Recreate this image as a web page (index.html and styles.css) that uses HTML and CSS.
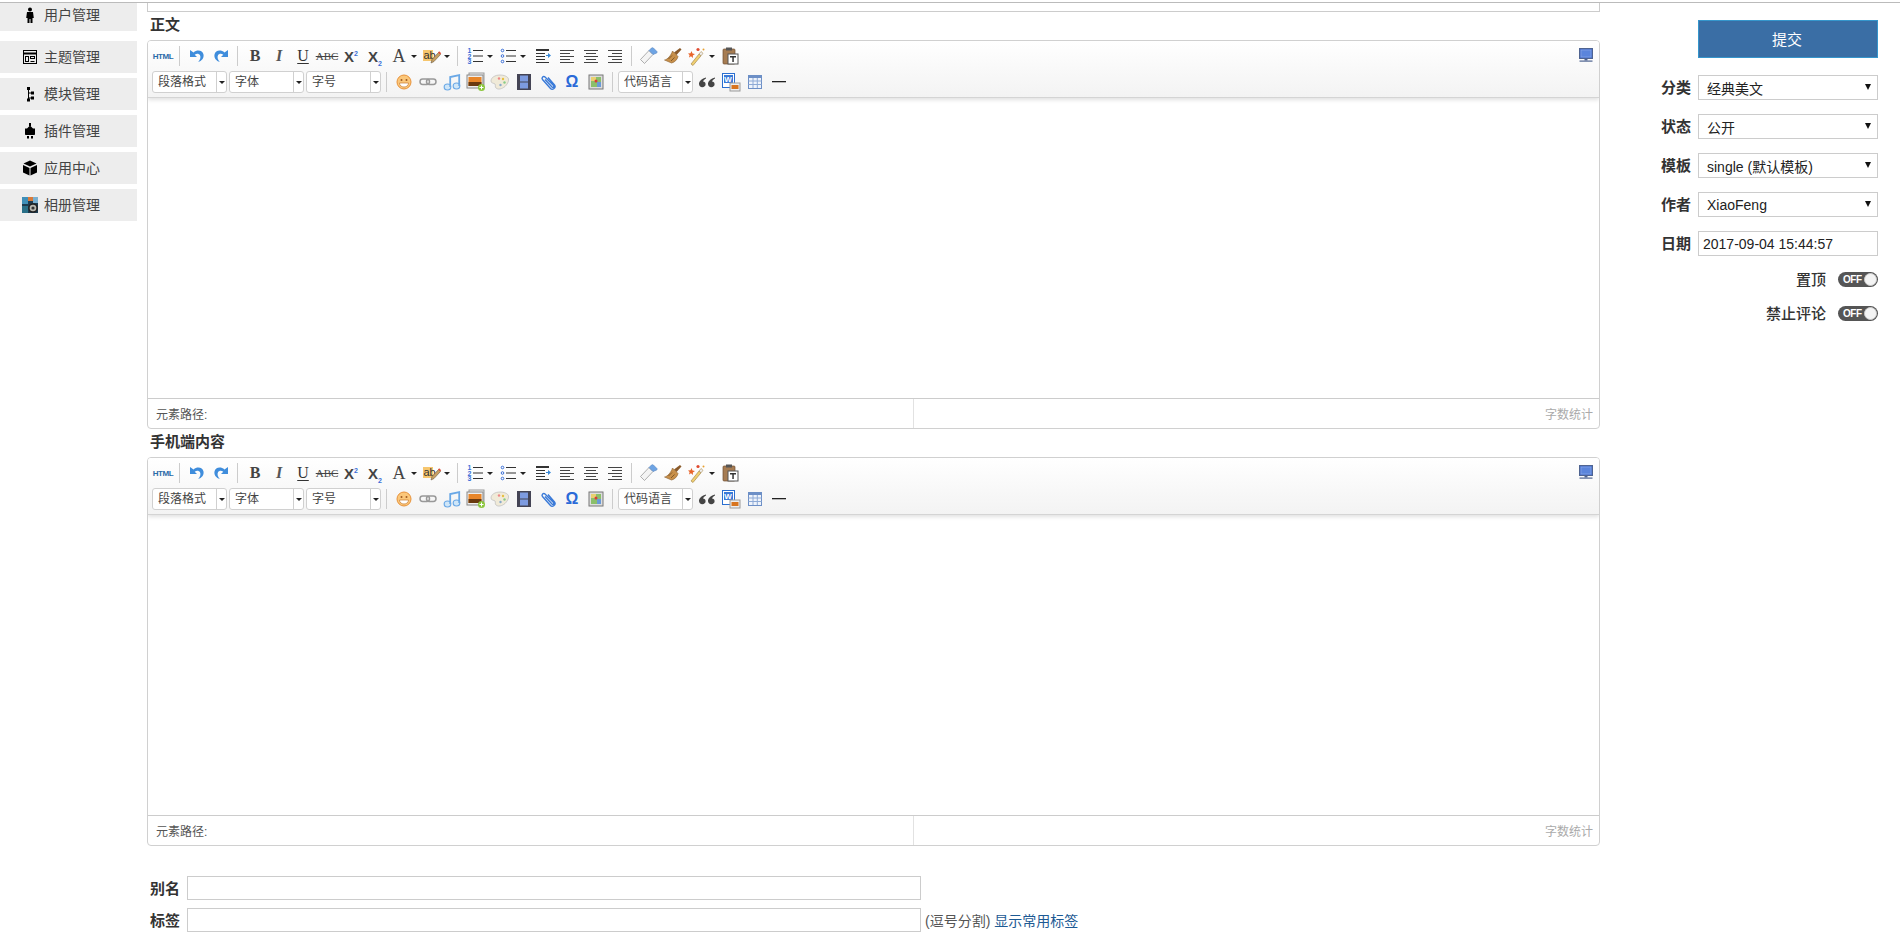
FILE: index.html
```html
<!DOCTYPE html>
<html lang="zh-CN">
<head>
<meta charset="utf-8">
<title>编辑文章</title>
<link rel="stylesheet" href="styles.css">
</head>
<body>
<svg class="defs" aria-hidden="true">
  <symbol id="i-undo" viewBox="0 0 20 20"><path d="M3 4v7h7L7.700 8.700c2-1.500 4.300-1.200 5.300.5 1 1.900.3 4.300-1.800 6.800 3.500-1 6-4 5.300-7.500C15.700 4.500 10.500 3 6.500 6.500z" fill="#3f8ddc"/></symbol>
  <symbol id="i-redo" viewBox="0 0 20 20"><path d="M17 4v7h-7l2.300-2.300c-2-1.500-4.300-1.200-5.300.5-1 1.900-.3 4.300 1.800 6.800-3.500-1-6-4-5.300-7.500C4.300 4.500 9.500 3 13.500 6.500z" fill="#3f8ddc"/></symbol>
  <symbol id="i-pencil" viewBox="0 0 20 20"><path d="M9 17l1-3.500 6.500-7 2 2-6.500 7z" fill="#c9a063" stroke="#6a5a40" stroke-width=".6"/><path d="M16 6.500l1.200-1.300 2 2L18 8.500z" fill="#e0503a"/></symbol>
  <symbol id="i-lines" viewBox="0 0 20 20"><g fill="#333"><rect x="8" y="4" width="10" height="1"/><rect x="8" y="9.500" width="10" height="1"/><rect x="8" y="15" width="10" height="1"/></g></symbol>
  <symbol id="i-ul" viewBox="0 0 20 20"><g fill="none" stroke="#3a6fd8"><circle cx="4.500" cy="4.500" r="1.300"/><circle cx="4.500" cy="10" r="1.300"/><circle cx="4.500" cy="15.500" r="1.300"/></g><g fill="#333"><rect x="8" y="4" width="10" height="1"/><rect x="8" y="9.500" width="10" height="1"/><rect x="8" y="15" width="10" height="1"/></g></symbol>
  <symbol id="i-indent" viewBox="0 0 20 20"><g fill="#333"><rect x="3" y="3" width="13" height="2"/><rect x="3" y="7" width="9" height="1"/><rect x="3" y="10" width="9" height="1"/><rect x="3" y="13" width="9" height="1"/><rect x="3" y="16" width="13" height="1"/></g><path d="M13 9h2V7l3 2.500-3 2.500v-2h-2z" fill="#3a8ad8"/></symbol>
  <symbol id="i-left" viewBox="0 0 20 20"><g fill="#444"><rect x="3" y="4" width="14" height="1"/><rect x="3" y="7" width="10" height="1"/><rect x="3" y="10" width="14" height="1"/><rect x="3" y="13" width="10" height="1"/><rect x="3" y="16" width="14" height="1"/></g></symbol>
  <symbol id="i-center" viewBox="0 0 20 20"><g fill="#444"><rect x="3" y="4" width="14" height="1"/><rect x="5" y="7" width="10" height="1"/><rect x="3" y="10" width="14" height="1"/><rect x="5" y="13" width="10" height="1"/><rect x="3" y="16" width="14" height="1"/></g></symbol>
  <symbol id="i-right" viewBox="0 0 20 20"><g fill="#444"><rect x="3" y="4" width="14" height="1"/><rect x="7" y="7" width="10" height="1"/><rect x="3" y="10" width="14" height="1"/><rect x="7" y="13" width="10" height="1"/><rect x="3" y="16" width="14" height="1"/></g></symbol>
  <symbol id="i-eraser" viewBox="0 0 20 20"><path d="M1.500 13.500 10 4.500l4 4L5.500 17.500z" fill="#f4f4f4" stroke="#9a9a9a" stroke-width=".8"/><path d="M10 4.500l2.500-2.500c.6-.5 1.300-.5 1.900 0l3.300 3.300c.5.600.5 1.200 0 1.800L14 8.500z" fill="#6ea4e4" stroke="#5a86c0" stroke-width=".6"/></symbol>
  <symbol id="i-brush" viewBox="0 0 20 20"><path d="M11 6.500 17 2l1.500 1.500L13.500 9z" fill="#8a5a2a"/><path d="M9.500 5 15 10.500c-.5 3-3.500 6-6.500 6.500L1.500 14c3-.5 6.500-4.500 8-9z" fill="#c8904a" stroke="#8a6030" stroke-width=".6"/><path d="M5.500 13 9 9.500M8 15l3.500-3.500" stroke="#7a5428" stroke-width=".9"/></symbol>
  <symbol id="i-wand" viewBox="0 0 20 20"><path d="M4 18 12 8l2 1.800L6 19.500z" fill="#f0d070" stroke="#a88a50" stroke-width=".7"/><path d="M12 8l2-2.500 2 1.800-2 2.500z" fill="#eee" stroke="#a88a50" stroke-width=".6"/><path d="M4.500 5l1 2.500L8 8 5.800 9.500l.2 2.500-2-1.700L2 11.500l.6-2.500L1 7.500l2.500-.2z" fill="#e8642a"/><circle cx="11" cy="3.500" r="1.600" fill="#e04a30"/><circle cx="16.500" cy="3.500" r="1" fill="#e8a030"/></symbol>
  <symbol id="i-paste" viewBox="0 0 20 20"><rect x="3" y="3" width="12" height="15" rx="1" fill="#a67c52" stroke="#6e4e30" stroke-width=".7"/><rect x="6" y="1.500" width="6" height="3" fill="#555"/><rect x="8" y="8" width="10" height="10" fill="#fff" stroke="#555"/><rect x="10" y="10" width="6" height="1.500" fill="#333"/><rect x="12.300" y="10" width="1.500" height="6" fill="#333"/></symbol>
  <symbol id="i-emoji" viewBox="0 0 20 20"><circle cx="10" cy="10" r="7" fill="#fbc77a" stroke="#e8923a"/><circle cx="7.500" cy="8" r="1" fill="#a05a20"/><circle cx="12.500" cy="8" r="1" fill="#a05a20"/><path d="M5.500 11h9c0 2.500-2 4-4.500 4s-4.500-1.500-4.500-4z" fill="#fff" stroke="#c67a30" stroke-width=".7"/></symbol>
  <symbol id="i-link" viewBox="0 0 20 20"><g fill="none" stroke="#999" stroke-width="1.500"><rect x="2" y="7" width="9.500" height="5.500" rx="2.700"/><rect x="8.500" y="7" width="9.500" height="5.500" rx="2.700"/></g></symbol>
  <symbol id="i-music" viewBox="0 0 20 20"><g fill="#cfe6f8" stroke="#6aa8e6" stroke-width="1.200"><ellipse cx="5.500" cy="15" rx="3.300" ry="3"/><ellipse cx="14.500" cy="14" rx="3.300" ry="3"/><path d="M8.200 15V5l9-2v11" fill="none" stroke-width="1.800"/></g></symbol>
  <symbol id="i-image" viewBox="0 0 20 20"><rect x="3" y="1" width="15" height="12" fill="#f0f0f0" stroke="#999"/><rect x="1" y="3" width="16" height="13" fill="#eee" stroke="#888"/><rect x="2.500" y="5" width="13" height="9" fill="#e8862a"/><rect x="2.500" y="10" width="13" height="4" fill="#6a3a10"/><circle cx="15.500" cy="15.500" r="3.500" fill="#8cc63e"/><path d="M15.500 13.500v4M13.500 15.500h4" stroke="#fff"/></symbol>
  <symbol id="i-palette" viewBox="0 0 20 20"><path d="M10 3C5 3 1 5.500 1 9c0 2.500 3 2 4 3 1 1.200-.5 2.500 1 4 2 2 6 1 9-1.500 2-1.800 4-5 3.500-7.500C18 4.500 14 3 10 3z" fill="#f0ead8" stroke="#bbb" stroke-width=".7"/><circle cx="9" cy="6.500" r="1.200" fill="#e88"/><circle cx="13" cy="7" r="1.200" fill="#e8c040"/><circle cx="14.500" cy="10.500" r="1.200" fill="#8c8"/><circle cx="10.500" cy="13" r="1.200" fill="#8ac"/></symbol>
  <symbol id="i-film" viewBox="0 0 20 20"><rect x="3" y="2" width="14" height="16" fill="#445"/><rect x="6" y="3.500" width="8" height="6" fill="#7d9be0"/><rect x="6" y="10.500" width="8" height="6" fill="#7d9be0"/></symbol>
  <symbol id="i-clip" viewBox="0 0 20 20"><path d="M7 7.500l7 7.500c1 1 2.500-.5 1.500-1.500L7 5C5.500 3.500 3 5.500 4.500 7.500l8 9c2 2 6-1 4-3.500L10 5.500" fill="none" stroke="#3a7ad8" stroke-width="1.400"/></symbol>
  <symbol id="i-map" viewBox="0 0 20 20"><rect x="3" y="3" width="14" height="14" fill="#ddd" stroke="#777"/><rect x="5" y="5" width="10" height="10" fill="#8bbf6a"/><rect x="5" y="5" width="5" height="4" fill="#e9d070"/><rect x="11" y="10" width="4" height="5" fill="#6a9ad8"/><circle cx="10" cy="9" r="1.500" fill="#d83a3a"/></symbol>
  <symbol id="i-quote" viewBox="0 0 20 20"><g fill="#444"><path d="M9 5.500C5 6.500 2 9 2 12c0 2 1.400 3.200 3.300 3.200S8.600 14 8.600 12.300c0-1.600-1.100-2.700-2.600-2.700.6-1.400 1.800-2.400 3-3z"/><path d="M18 5.500c-4 1-7 3.500-7 6.500 0 2 1.400 3.200 3.300 3.200s3.300-1.200 3.300-2.900c0-1.600-1.100-2.700-2.600-2.700.6-1.400 1.800-2.400 3-3z"/></g></symbol>
  <symbol id="i-word" viewBox="0 0 20 20"><rect x="1.500" y="1.500" width="12" height="14" fill="#fff" stroke="#2a6fd0"/><rect x="3" y="3" width="9" height="8" fill="#3a7ad8"/></symbol>
  <symbol id="i-wordimg" viewBox="0 0 20 20"><rect x="9" y="11" width="10" height="8" fill="#eee" stroke="#999"/><rect x="10.500" y="13" width="7" height="4" fill="#d8741e"/></symbol>
  <symbol id="i-table" viewBox="0 0 20 20"><rect x="3.500" y="3.500" width="13" height="13" fill="#eef3fb" stroke="#6d8fc6"/><rect x="3.500" y="3.500" width="13" height="2.500" fill="#6d8fc6"/><path d="M3.500 9h13M3.500 12.500h13M8 6v10M12.300 6v10" stroke="#8eaad6" fill="none"/></symbol>
  <symbol id="i-hr" viewBox="0 0 20 20"><rect x="3" y="9" width="14" height="1.300" fill="#222"/></symbol>
  <symbol id="i-screen" viewBox="0 0 20 20"><rect x="3.500" y="2.500" width="13" height="10" fill="#4a72cc" stroke="#4f6491"/><rect x="5" y="4" width="10" height="7" fill="#5b85dc" stroke="#9ab4e8" stroke-width=".5"/><rect x="8.500" y="13" width="3" height="1.500" fill="#4f6491"/><rect x="3.500" y="14.500" width="13" height="1.200" fill="#4f6491"/></symbol>
  <symbol id="n-user" viewBox="0 0 16 16"><circle cx="8" cy="2.500" r="2"/><path d="M5 5h6l.8 6H10.500v5H8.500v-4h-1v4h-2v-5H4.200z"/></symbol>
  <symbol id="n-theme" viewBox="0 0 16 16"><g fill="none" stroke="#000"><rect x="1.500" y="1.500" width="13" height="13"/><path d="M1.500 4.500h13" stroke-width="2"/><rect x="3.500" y="7.500" width="3" height="5"/><rect x="8.500" y="7.500" width="4" height="2"/><path d="M8.500 12.500h4"/></g></symbol>
  <symbol id="n-tree" viewBox="0 0 16 16"><rect x="5" y="1" width="3" height="3"/><rect x="6" y="4" width="1" height="11"/><rect x="6" y="6.500" width="5" height="1"/><rect x="6" y="11.500" width="5" height="1"/><rect x="9" y="5.500" width="3" height="3"/><rect x="9" y="10.500" width="3" height="3"/><rect x="5" y="12.500" width="3" height="3"/></symbol>
  <symbol id="n-plug" viewBox="0 0 16 16"><rect x="7" y="0" width="2" height="3"/><path d="M8 2.500l3 3H13v5.500c0 .6-.5 1-1 1H4c-.5 0-1-.4-1-1V5.500h2z"/><rect x="5" y="13" width="2" height="2.500"/><rect x="9" y="13" width="2" height="2.500"/></symbol>
  <symbol id="n-box" viewBox="0 0 16 16"><path d="M8 .5l6.500 3L8 6.500 1.500 3.500z"/><path d="M1 5l6.500 3v7.500L1 12.500zM15 5 8.500 8v7.500l6.500-3z"/></symbol>
  <symbol id="n-album" viewBox="0 0 16 16"><rect width="16" height="16" fill="#1d3c50"/><rect width="6" height="7" fill="#3f8fb8"/><rect x="6" y="0" width="5" height="4" fill="#d87a3a"/><rect x="11" y="0" width="5" height="6" fill="#7ab0d0"/><rect x="0" y="9" width="6" height="7" fill="#2a7088"/><circle cx="11" cy="11" r="4.800" fill="#222"/><circle cx="11" cy="11" r="3.300" fill="#b8b8b0"/><circle cx="11" cy="11" r="1.600" fill="#333"/></symbol>
</svg>

<div class="toprule"></div>
<div class="page">
  <nav class="sidebar">
    <a class="nav-item nav-first"><svg class="nav-icon"><use href="#n-user"/></svg>用户管理</a>
    <a class="nav-item"><svg class="nav-icon"><use href="#n-theme"/></svg>主题管理</a>
    <a class="nav-item"><svg class="nav-icon"><use href="#n-tree"/></svg>模块管理</a>
    <a class="nav-item"><svg class="nav-icon"><use href="#n-plug"/></svg>插件管理</a>
    <a class="nav-item"><svg class="nav-icon"><use href="#n-box"/></svg>应用中心</a>
    <a class="nav-item"><svg class="nav-icon"><use href="#n-album"/></svg>相册管理</a>
  </nav>

  <main class="main">
    <div class="title-box"></div>
    <div class="field-label field-label-first">正文</div>
    <section class="editor">
      <div class="toolbar">
        <div class="row">
          <span class="b t-html">HTML</span><i class="sep"></i>
          <span class="b"><svg class="ic"><use href="#i-undo"/></svg></span><span class="b"><svg class="ic"><use href="#i-redo"/></svg></span><i class="sep"></i>
          <span class="b t-b">B</span><span class="b t-i">I</span><span class="b t-u">U</span><span class="b t-s">ABC</span>
          <span class="b t-x"><span>X<sup>2</sup></span></span><span class="b t-x"><span>X<sub>2</sub></span></span>
          <span class="split"><span class="b t-a">A</span><i class="caret"></i></span>
          <span class="split"><span class="b"><svg class="ic" viewBox="0 0 20 20"><rect x="1" y="4" width="10" height="11" fill="#f6c66e"/><text class="svg-ab" x="1.500" y="13">ab</text><use href="#i-pencil" width="20" height="20"/></svg></span><i class="caret"></i></span><i class="sep"></i>
          <span class="split"><span class="b"><svg class="ic" viewBox="0 0 20 20"><text class="svg-num" x="2.500" y="7">1</text><text class="svg-num" x="2.500" y="12.500">2</text><text class="svg-num" x="2.500" y="18">3</text><use href="#i-lines" width="20" height="20"/></svg></span><i class="caret"></i></span>
          <span class="split"><span class="b"><svg class="ic"><use href="#i-ul"/></svg></span><i class="caret"></i></span>
          <span class="b b-gap"><svg class="ic"><use href="#i-indent"/></svg></span><span class="b"><svg class="ic"><use href="#i-left"/></svg></span><span class="b"><svg class="ic"><use href="#i-center"/></svg></span><span class="b"><svg class="ic"><use href="#i-right"/></svg></span><i class="sep"></i>
          <span class="b"><svg class="ic"><use href="#i-eraser"/></svg></span><span class="b"><svg class="ic"><use href="#i-brush"/></svg></span>
          <span class="split"><span class="b"><svg class="ic"><use href="#i-wand"/></svg></span><i class="caret"></i></span>
          <span class="b"><svg class="ic"><use href="#i-paste"/></svg></span>
          <span class="b b-end"><svg class="ic"><use href="#i-screen"/></svg></span>
        </div>
        <div class="row row-two">
          <span class="combo"><span class="combo-text">段落格式</span><span class="combo-arrow"></span></span>
          <span class="combo"><span class="combo-text">字体</span><span class="combo-arrow"></span></span>
          <span class="combo combo-last"><span class="combo-text">字号</span><span class="combo-arrow"></span></span><i class="sep sep-wide"></i>
          <span class="b"><svg class="ic"><use href="#i-emoji"/></svg></span><span class="b"><svg class="ic"><use href="#i-link"/></svg></span><span class="b"><svg class="ic"><use href="#i-music"/></svg></span><span class="b"><svg class="ic"><use href="#i-image"/></svg></span><span class="b"><svg class="ic"><use href="#i-palette"/></svg></span><span class="b"><svg class="ic"><use href="#i-film"/></svg></span><span class="b"><svg class="ic"><use href="#i-clip"/></svg></span><span class="b t-o">Ω</span><span class="b"><svg class="ic"><use href="#i-map"/></svg></span><i class="sep"></i>
          <span class="combo"><span class="combo-text">代码语言</span><span class="combo-arrow"></span></span>
          <span class="b"><svg class="ic"><use href="#i-quote"/></svg></span><span class="b"><svg class="ic" viewBox="0 0 20 20"><use href="#i-word" width="20" height="20"/><text class="svg-w" x="3.300" y="10">W</text><use href="#i-wordimg" width="20" height="20"/></svg></span><span class="b"><svg class="ic"><use href="#i-table"/></svg></span><span class="b"><svg class="ic"><use href="#i-hr"/></svg></span>
        </div>
      </div>
      <div class="canvas"></div>
      <div class="status"><span class="path">元素路径:</span><span class="count">字数统计</span></div>
    </section>

    <div class="field-label">手机端内容</div>
    <section class="editor">
      <div class="toolbar">
        <div class="row">
          <span class="b t-html">HTML</span><i class="sep"></i>
          <span class="b"><svg class="ic"><use href="#i-undo"/></svg></span><span class="b"><svg class="ic"><use href="#i-redo"/></svg></span><i class="sep"></i>
          <span class="b t-b">B</span><span class="b t-i">I</span><span class="b t-u">U</span><span class="b t-s">ABC</span>
          <span class="b t-x"><span>X<sup>2</sup></span></span><span class="b t-x"><span>X<sub>2</sub></span></span>
          <span class="split"><span class="b t-a">A</span><i class="caret"></i></span>
          <span class="split"><span class="b"><svg class="ic" viewBox="0 0 20 20"><rect x="1" y="4" width="10" height="11" fill="#f6c66e"/><text class="svg-ab" x="1.500" y="13">ab</text><use href="#i-pencil" width="20" height="20"/></svg></span><i class="caret"></i></span><i class="sep"></i>
          <span class="split"><span class="b"><svg class="ic" viewBox="0 0 20 20"><text class="svg-num" x="2.500" y="7">1</text><text class="svg-num" x="2.500" y="12.500">2</text><text class="svg-num" x="2.500" y="18">3</text><use href="#i-lines" width="20" height="20"/></svg></span><i class="caret"></i></span>
          <span class="split"><span class="b"><svg class="ic"><use href="#i-ul"/></svg></span><i class="caret"></i></span>
          <span class="b b-gap"><svg class="ic"><use href="#i-indent"/></svg></span><span class="b"><svg class="ic"><use href="#i-left"/></svg></span><span class="b"><svg class="ic"><use href="#i-center"/></svg></span><span class="b"><svg class="ic"><use href="#i-right"/></svg></span><i class="sep"></i>
          <span class="b"><svg class="ic"><use href="#i-eraser"/></svg></span><span class="b"><svg class="ic"><use href="#i-brush"/></svg></span>
          <span class="split"><span class="b"><svg class="ic"><use href="#i-wand"/></svg></span><i class="caret"></i></span>
          <span class="b"><svg class="ic"><use href="#i-paste"/></svg></span>
          <span class="b b-end"><svg class="ic"><use href="#i-screen"/></svg></span>
        </div>
        <div class="row row-two">
          <span class="combo"><span class="combo-text">段落格式</span><span class="combo-arrow"></span></span>
          <span class="combo"><span class="combo-text">字体</span><span class="combo-arrow"></span></span>
          <span class="combo combo-last"><span class="combo-text">字号</span><span class="combo-arrow"></span></span><i class="sep sep-wide"></i>
          <span class="b"><svg class="ic"><use href="#i-emoji"/></svg></span><span class="b"><svg class="ic"><use href="#i-link"/></svg></span><span class="b"><svg class="ic"><use href="#i-music"/></svg></span><span class="b"><svg class="ic"><use href="#i-image"/></svg></span><span class="b"><svg class="ic"><use href="#i-palette"/></svg></span><span class="b"><svg class="ic"><use href="#i-film"/></svg></span><span class="b"><svg class="ic"><use href="#i-clip"/></svg></span><span class="b t-o">Ω</span><span class="b"><svg class="ic"><use href="#i-map"/></svg></span><i class="sep"></i>
          <span class="combo"><span class="combo-text">代码语言</span><span class="combo-arrow"></span></span>
          <span class="b"><svg class="ic"><use href="#i-quote"/></svg></span><span class="b"><svg class="ic" viewBox="0 0 20 20"><use href="#i-word" width="20" height="20"/><text class="svg-w" x="3.300" y="10">W</text><use href="#i-wordimg" width="20" height="20"/></svg></span><span class="b"><svg class="ic"><use href="#i-table"/></svg></span><span class="b"><svg class="ic"><use href="#i-hr"/></svg></span>
        </div>
      </div>
      <div class="canvas"></div>
      <div class="status"><span class="path">元素路径:</span><span class="count">字数统计</span></div>
    </section>

    <div class="meta">
      <label class="meta-row"><span class="meta-label">别名</span><input class="meta-input" type="text"></label>
      <label class="meta-row"><span class="meta-label">标签</span><input class="meta-input" type="text"><span class="hint">(逗号分割) <a class="hint-link">显示常用标签</a></span></label>
    </div>
  </main>

  <aside class="side">
    <button class="submit" type="button">提交</button>
    <div class="side-row"><span class="side-label">分类</span><span class="select"><span>经典美文</span></span></div>
    <div class="side-row"><span class="side-label">状态</span><span class="select"><span>公开</span></span></div>
    <div class="side-row"><span class="side-label">模板</span><span class="select"><span>single (默认模板)</span></span></div>
    <div class="side-row"><span class="side-label">作者</span><span class="select"><span>XiaoFeng</span></span></div>
    <div class="side-row"><span class="side-label">日期</span><input class="date" type="text" value="2017-09-04 15:44:57"></div>
    <div class="toggle-row toggle-top"><span class="side-label toggle-label">置顶</span><span class="toggle"><span class="toggle-text">OFF</span><span class="knob"></span></span></div>
    <div class="toggle-row"><span class="side-label toggle-label">禁止评论</span><span class="toggle"><span class="toggle-text">OFF</span><span class="knob"></span></span></div>
  </aside>
</div>
</body>
</html>
```

FILE: styles.css
```css
* { box-sizing: border-box; }
html, body { margin: 0; padding: 0; height: 942px; overflow: hidden; background: #fff; }
body { font-family: "Liberation Sans", "Noto Sans CJK SC", sans-serif; font-size: 14px; color: #333; }
.defs { width: 0; height: 0; display: block; overflow: hidden; }
.toprule { height: 3px; border-bottom: 1px solid #bbb; }
.page { display: flex; align-items: flex-start; }

.sidebar { width: 137px; flex: none; display: flex; flex-direction: column; gap: 5px; }
.nav-item { height: 32px; background: #ededed; display: flex; align-items: center; padding-left: 22px; gap: 6px; color: #444; line-height: 1; }
.nav-first { height: 28px; margin-bottom: 5px; padding-bottom: 4px; }
.nav-icon { width: 16px; height: 16px; flex: none; fill: #000; }

.main { width: 1453px; margin-left: 10px; flex: none; }
.title-box { height: 9px; border: 1px solid #ccc; border-top: 0; margin-bottom: 1px; }
.field-label { height: 28px; line-height: 25px; padding-left: 3px; font-size: 15px; font-weight: 700; color: #333; }
.field-label-first { height: 27px; line-height: 23px; }

.editor { height: 389px; border: 1px solid #d0d0d0; border-radius: 4px; display: flex; flex-direction: column; overflow: hidden; }
.toolbar { height: 57px; flex: none; padding: 3px 1px 0 3px; background: linear-gradient(#fff, #f3f3f3); border-bottom: 1px solid #d4d4d4; box-shadow: 0 2px 4px rgba(0, 0, 0, .12); position: relative; }
.row { display: flex; align-items: center; height: 24px; }
.row-two { margin-top: 2px; padding-left: 1px; }

.b { width: 24px; height: 24px; flex: none; display: flex; align-items: center; justify-content: center; }
.b-gap { margin-left: 2px; }
.b-end { margin-left: auto; }
.ic { width: 20px; height: 20px; display: block; }
.split { width: 33px; flex: none; display: flex; align-items: center; }
.caret { width: 0; height: 0; border-style: solid; border-width: 3px 3px 0; border-color: #222 transparent transparent; }
.sep { width: 10px; height: 20px; flex: none; padding-left: 4px; display: block; }
.sep::before { content: ""; display: block; width: 1px; height: 20px; background: #ccc; }
.sep-wide { width: 11px; padding-left: 5px; }

.svg-ab { font-family: "Liberation Sans", sans-serif; font-size: 11px; fill: #333; }
.svg-num { font-family: "Liberation Sans", sans-serif; font-size: 7px; font-weight: 700; fill: #3a6fd8; }
.svg-w { font-family: "Liberation Sans", sans-serif; font-size: 8px; font-weight: 700; fill: #fff; }
.t-html { font-size: 8px; font-weight: 700; color: #2a6aa8; letter-spacing: -.4px; }
.t-b { font-family: "Liberation Serif", serif; font-weight: 700; font-size: 16px; color: #444; }
.t-i { font-family: "Liberation Serif", serif; font-style: italic; font-size: 16px; font-weight: 700; color: #555; }
.t-u { font-family: "Liberation Serif", serif; font-size: 16px; color: #333; text-decoration: underline; text-underline-offset: 2px; }
.t-s { font-family: "Liberation Serif", serif; font-size: 11px; color: #444; text-decoration: line-through; }
.t-x { font-size: 15px; font-weight: 700; color: #444; }
.t-x sup, .t-x sub { font-size: 7px; color: #3a6fd8; line-height: 0; }
.t-a { font-family: "Liberation Serif", serif; font-size: 18px; color: #444; }
.t-o { font-size: 16px; font-weight: 700; color: #2a6ad8; }

.combo { width: 75px; height: 22px; flex: none; display: flex; background: #fff; border: 1px solid #d0d0d0; border-radius: 3px; margin-right: 2px; font-size: 12px; line-height: 21px; color: #444; }
.combo-last { margin-right: 0; }
.combo-text { width: 64px; padding-left: 5px; border-right: 1px solid #d0d0d0; }
.combo-arrow { flex: 1; display: flex; align-items: center; justify-content: center; }
.combo-arrow::before { content: ""; border-style: solid; border-width: 3px 3px 0; border-color: #222 transparent transparent; }

.canvas { flex: 1; background: #fff; }
.status { height: 30px; flex: none; display: flex; align-items: center; border-top: 1px solid #ccc; font-size: 12px; }
.path { width: 766px; height: 100%; display: flex; align-items: center; padding-left: 8px; color: #555; border-right: 1px solid #e2e2e2; }
.count { flex: 1; text-align: right; padding-right: 6px; color: #aaa; }

.meta { margin-top: 30px; display: flex; flex-direction: column; gap: 8px; }
.meta-row { display: flex; align-items: center; height: 24px; padding-left: 3px; }
.meta-label { width: 37px; flex: none; font-size: 15px; font-weight: 700; color: #333; padding-bottom: 2px; }
.meta-input { width: 734px; height: 24px; border: 1px solid #ccc; background: #fff; padding: 0 4px; font: inherit; }
.hint { margin-left: 4px; color: #555; white-space: nowrap; padding-bottom: 1px; }
.hint-link { color: #1d5a94; }

.side { flex: 1; padding: 17px 22px 0 0; display: flex; flex-direction: column; align-items: flex-end; }
.submit { width: 180px; height: 38px; margin-bottom: 17px; border: 1px solid #3596cc; background: #3a6ea5; color: #fff; font: inherit; font-size: 15px; padding: 0 2px 2px 0; }
.side-row { display: flex; align-items: center; gap: 7px; height: 25px; margin-bottom: 14px; }
.side-label { font-size: 15px; font-weight: 700; color: #333; line-height: 1; }
.toggle-label { font-weight: 500; }
.select { width: 180px; height: 25px; border: 1px solid #ccc; display: flex; align-items: center; padding: 1px 0 0 8px; color: #222; position: relative; }
.select::after { content: ""; position: absolute; right: 6px; top: 8px; border-style: solid; border-width: 6px 3.500px 0; border-color: #111 transparent transparent; }
.date { width: 180px; height: 25px; border: 1px solid #ccc; padding: 0 4px; font: inherit; color: #222; }
.toggle-row { display: flex; align-items: center; gap: 12px; height: 15px; margin-bottom: 19px; }
.toggle-top { margin-top: 2px; }
.toggle { width: 40px; height: 15px; border-radius: 8px; background: #555; display: flex; align-items: center; justify-content: space-between; padding: 0 1px 0 5px; }
.toggle-text { color: #fff; font-size: 10px; font-weight: 700; line-height: 1; letter-spacing: -.5px; }
.knob { width: 13px; height: 13px; border-radius: 50%; background: #f4f4f4; border: 1px solid #ccc; }
```
